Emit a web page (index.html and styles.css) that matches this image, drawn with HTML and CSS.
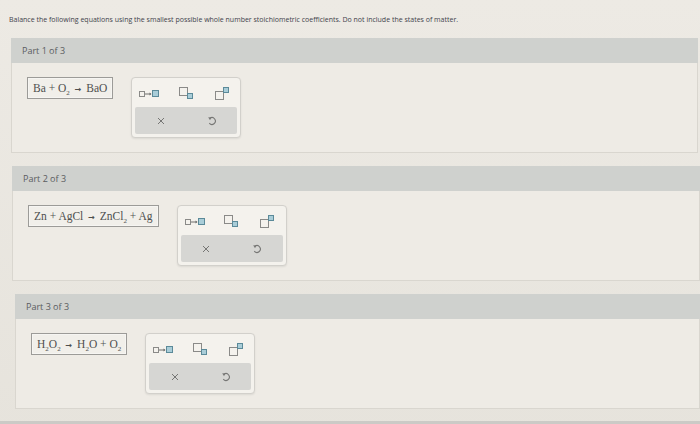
FILE: index.html
```html
<!DOCTYPE html>
<html lang="en">
<head>
  <meta charset="UTF-8" />
  <title>Balance the equations</title>
  <link rel="stylesheet" href="styles.css">
</head>
<body>
  <p class="intro">Balance the following equations using the smallest possible whole number stoichiometric coefficients. Do not include the states of matter.</p>

  <section class="part part-1">
    <div class="part-head">Part 1 of 3</div>
    <div class="part-body">
      <div class="equation">Ba + O<sub>2</sub> <span class="arrow">&#8594;</span> BaO</div>
      <div class="toolbox">
        <div class="tools-top">
          <svg class="ico-arrow" viewBox="0 0 22 10" width="22" height="10"><rect x="0.5" y="2.5" width="5" height="5" fill="none" stroke="#8a8a88"/><path d="M6 5h6" stroke="#6f6f6d"/><path d="M10.5 3.5 12.5 5 10.5 6.5z" fill="#6f6f6d"/><rect x="13.5" y="1.5" width="6" height="6" fill="#a9cdd8" stroke="#5b8a99"/></svg>
          <svg class="ico-sub" viewBox="0 0 15 13" width="15" height="13"><rect x="0.5" y="0.5" width="8" height="8" fill="none" stroke="#8a8a88"/><rect x="8.5" y="6.5" width="5" height="5" fill="#a9cdd8" stroke="#5b8a99"/></svg>
          <svg class="ico-sup" viewBox="0 0 15 13" width="15" height="13"><rect x="0.5" y="4.5" width="8" height="8" fill="none" stroke="#8a8a88"/><rect x="8.5" y="0.5" width="5" height="5" fill="#a9cdd8" stroke="#5b8a99"/></svg>
        </div>
        <div class="tools-bottom">
          <svg viewBox="0 0 8 8" width="8" height="8"><path d="M1 1l6 6M7 1 1 7" stroke="#767674" stroke-width="1"/></svg>
          <svg viewBox="0 0 10 10" width="10" height="10"><path d="M3 2.2A3.4 3.4 0 1 1 2.3 7.2" fill="none" stroke="#767674" stroke-width="1.1"/><path d="M1.2 1.2 4.4 1.4 3 4.2z" fill="#767674"/></svg>
        </div>
      </div>
    </div>
  </section>

  <section class="part part-2">
    <div class="part-head">Part 2 of 3</div>
    <div class="part-body">
      <div class="equation">Zn + AgCl <span class="arrow">&#8594;</span> ZnCl<sub>2</sub> + Ag</div>
      <div class="toolbox">
        <div class="tools-top">
          <svg class="ico-arrow" viewBox="0 0 22 10" width="22" height="10"><rect x="0.5" y="2.5" width="5" height="5" fill="none" stroke="#8a8a88"/><path d="M6 5h6" stroke="#6f6f6d"/><path d="M10.5 3.5 12.5 5 10.5 6.5z" fill="#6f6f6d"/><rect x="13.5" y="1.5" width="6" height="6" fill="#a9cdd8" stroke="#5b8a99"/></svg>
          <svg class="ico-sub" viewBox="0 0 15 13" width="15" height="13"><rect x="0.5" y="0.5" width="8" height="8" fill="none" stroke="#8a8a88"/><rect x="8.5" y="6.5" width="5" height="5" fill="#a9cdd8" stroke="#5b8a99"/></svg>
          <svg class="ico-sup" viewBox="0 0 15 13" width="15" height="13"><rect x="0.5" y="4.5" width="8" height="8" fill="none" stroke="#8a8a88"/><rect x="8.5" y="0.5" width="5" height="5" fill="#a9cdd8" stroke="#5b8a99"/></svg>
        </div>
        <div class="tools-bottom">
          <svg viewBox="0 0 8 8" width="8" height="8"><path d="M1 1l6 6M7 1 1 7" stroke="#767674" stroke-width="1"/></svg>
          <svg viewBox="0 0 10 10" width="10" height="10"><path d="M3 2.2A3.4 3.4 0 1 1 2.3 7.2" fill="none" stroke="#767674" stroke-width="1.1"/><path d="M1.2 1.2 4.4 1.4 3 4.2z" fill="#767674"/></svg>
        </div>
      </div>
    </div>
  </section>

  <section class="part part-3">
    <div class="part-head">Part 3 of 3</div>
    <div class="part-body">
      <div class="equation">H<sub>2</sub>O<sub>2</sub> <span class="arrow">&#8594;</span> H<sub>2</sub>O + O<sub>2</sub></div>
      <div class="toolbox">
        <div class="tools-top">
          <svg class="ico-arrow" viewBox="0 0 22 10" width="22" height="10"><rect x="0.5" y="2.5" width="5" height="5" fill="none" stroke="#8a8a88"/><path d="M6 5h6" stroke="#6f6f6d"/><path d="M10.5 3.5 12.5 5 10.5 6.5z" fill="#6f6f6d"/><rect x="13.5" y="1.5" width="6" height="6" fill="#a9cdd8" stroke="#5b8a99"/></svg>
          <svg class="ico-sub" viewBox="0 0 15 13" width="15" height="13"><rect x="0.5" y="0.5" width="8" height="8" fill="none" stroke="#8a8a88"/><rect x="8.5" y="6.5" width="5" height="5" fill="#a9cdd8" stroke="#5b8a99"/></svg>
          <svg class="ico-sup" viewBox="0 0 15 13" width="15" height="13"><rect x="0.5" y="4.5" width="8" height="8" fill="none" stroke="#8a8a88"/><rect x="8.5" y="0.5" width="5" height="5" fill="#a9cdd8" stroke="#5b8a99"/></svg>
        </div>
        <div class="tools-bottom">
          <svg viewBox="0 0 8 8" width="8" height="8"><path d="M1 1l6 6M7 1 1 7" stroke="#767674" stroke-width="1"/></svg>
          <svg viewBox="0 0 10 10" width="10" height="10"><path d="M3 2.2A3.4 3.4 0 1 1 2.3 7.2" fill="none" stroke="#767674" stroke-width="1.1"/><path d="M1.2 1.2 4.4 1.4 3 4.2z" fill="#767674"/></svg>
        </div>
      </div>
    </div>
  </section>

  <div class="next-bar"></div>
</body>
</html>
```

FILE: styles.css
```css
body {
  margin: 0;
  font-family: "Open Sans", "DejaVu Sans", sans-serif;
  background: linear-gradient(#edeae4, #e6e3dc);
  color: #4a4a4a;
  overflow: hidden;
}
.intro {
  margin: 0 0 12px 0;
  padding: 14px 9px 0 9px;
  font-size: 7px;
  line-height: 12px;
  color: #3f434b;
  white-space: nowrap;
}
.part {
  margin-top: 13px;
  margin-right: 2px;
}
.part-1 {
  margin-top: 0;
  margin-left: 11px;
}
.part-2 {
  margin-left: 12px;
  margin-right: 0;
}
.part-3 {
  margin-left: 15px;
  margin-right: 0;
}
.part-head {
  height: 25px;
  line-height: 25px;
  padding-left: 11px;
  background: #cfd1ce;
  font-size: 9px;
  color: #5a5c5e;
}
.part-body {
  display: flex;
  align-items: flex-start;
  gap: 18px;
  height: 60px;
  padding: 14px 0 15px 15px;
  border: 1px solid #d9d6cf;
  border-top: none;
  background: #eeebe5;
}
.equation {
  height: 20px;
  line-height: 20px;
  padding: 0 5px;
  border: 1px solid #9c9b98;
  box-shadow: inset 0 0 0 1px #f6f5f2;
  background: #f1efea;
  font-family: "Liberation Serif", serif;
  font-size: 11.5px;
  color: #4f4f4f;
  white-space: nowrap;
}
.equation sub {
  font-size: 7px;
  line-height: 0;
}
.arrow {
  font-family: "DejaVu Sans", sans-serif;
  font-size: 8px;
  font-weight: bold;
  margin: 0 2px;
}
.toolbox {
  width: 108px;
  height: 59px;
  border: 1px solid #d2d0cb;
  border-radius: 4px;
  background: #f4f2ed;
  box-shadow: 0 1px 2px rgba(0,0,0,0.08);
  display: flex;
  flex-direction: column;
}
.tools-top {
  flex: 1;
  display: grid;
  grid-template-columns: repeat(3, 1fr);
  align-items: center;
  justify-items: center;
  padding-top: 2px;
}
.tools-bottom {
  height: 27px;
  margin: 0 3px 3px 3px;
  border-radius: 2px;
  background: #d6d6d3;
  display: grid;
  grid-template-columns: repeat(2, 1fr);
  align-items: center;
  justify-items: center;
}
.next-bar {
  margin-top: 12px;
  height: 20px;
  background: #cbcac6;
}
```
